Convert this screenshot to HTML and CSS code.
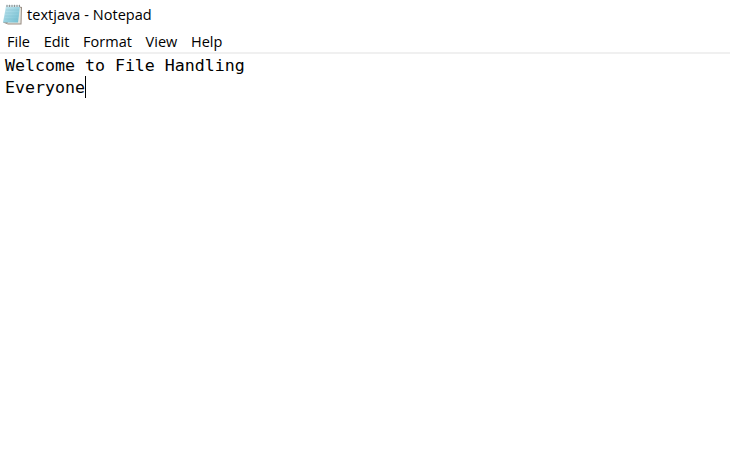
FILE: index.html
```html
<!DOCTYPE html>
<html lang="en">
<head>
<meta charset="utf-8">
<title>textjava - Notepad</title>
<link rel="stylesheet" href="styles.css">
</head>
<body>
<header class="titlebar">
<svg class="app-icon" width="21" height="22" viewBox="0 0 21 22">
<defs><linearGradient id="page" x1="0" y1="0" x2="1" y2="1"><stop offset="0" stop-color="#c9e8f0"/><stop offset=".5" stop-color="#9bd3e1"/><stop offset="1" stop-color="#6fbdd0"/></linearGradient></defs>
<path d="M17 2.5L20 3L19.5 20.5L6 20.5L1 18.5Z" fill="#9b8f85"/>
<path d="M17 3L19 4L18.5 19.5L5 19.5Z" fill="#e4e5df"/>
<path d="M4 2H18L16 18.5H1Z" fill="url(#page)"/>
<path d="M4 6H17M3.5 9H16.5M3 12H16.5M2.5 15H16" stroke="#75bacb" stroke-width=".6" opacity=".6"/>
<path d="M4.2 2H18" stroke="#d3e2e5" stroke-width="2"/>
<path d="M5 .8V3M7.5 .8V3M10 .8V3M12.5 .8V3M15 .8V3M17.5 .8V3" stroke="#85898a" stroke-width=".9"/>
</svg>
<h1 class="title">textjava - Notepad</h1>
</header>
<nav class="menu"><span>File</span><span>Edit</span><span>Format</span><span>View</span><span>Help</span></nav>
<main class="editor"><div>Welcome to File Handling</div><div class="line">Everyone<span class="caret"></span></div></main>
</body>
</html>
```
FILE: styles.css
```css
* { box-sizing: border-box; }
body { margin: 0; height: 470px; background: #fff; color: #000; font-family: "Open Sans", sans-serif; overflow: hidden; }
.titlebar { height: 29px; display: flex; align-items: center; padding-left: 2px; }
.app-icon { flex: none; }
.title { margin: 0 0 0 4px; font-size: 14.5px; font-weight: 400; line-height: 20px; letter-spacing: .04px; white-space: nowrap; }
.menu { height: 25px; display: flex; align-items: center; padding: 3px 0 0 7px; gap: 13.7px; border-bottom: 2px solid #f0f0f0; font-size: 14.5px; line-height: 20px; }
.editor { padding: 1px 5px 0; font-family: "DejaVu Sans Mono", monospace; font-size: 16.6px; line-height: 22px; white-space: pre; }
.line { display: flex; align-items: center; }
.caret { width: 1px; height: 22px; margin-top: -2px; background: #000; }
```
